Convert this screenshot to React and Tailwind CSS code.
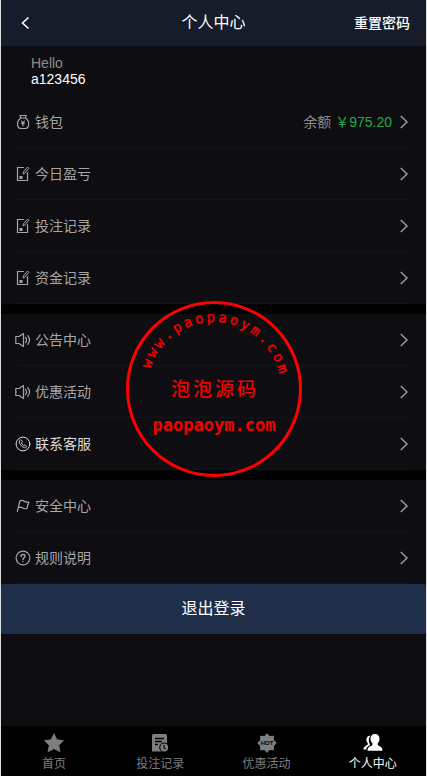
import React from 'react';

function Icon({ children }) {
  return (
    <svg viewBox="0 0 16 16" fill="none" stroke="currentColor" strokeWidth="1.200" strokeLinecap="round" strokeLinejoin="round" aria-hidden="true" className="-ml-0.5 size-4 shrink-0">
      {children}
    </svg>
  );
}

function WalletIcon() {
  return (
    <Icon>
      <path d="M5 1.500h6.200L10.300 4H5.900z M5.900 4C3.800 5.200 2.500 7.300 2.500 9.800c0 3 1.300 4.700 3.300 4.700h4.600c2 0 3.300-1.700 3.300-4.700 0-2.500-1.300-4.600-3.400-5.800" />
      <path d="M6.500 7.200L8 9l1.500-1.800M6.600 9.500h2.800M8 9v2.800" />
    </Icon>
  );
}

function NoteIcon() {
  return (
    <Icon>
      <path d="M8.500 1.500h-6v13h10V6.500" strokeLinejoin="miter" />
      <path d="M12.300 1.300L8.500 5.800 8 7.900l1.900-.8 3.700-4.500z" strokeWidth="1" />
      <path d="M4.500 10h3v3h-3z" fill="currentColor" stroke="none" />
    </Icon>
  );
}

function SpeakerIcon() {
  return (
    <Icon>
      <path d="M4 4.500H.8v7H4L8.500 14.500v-13z M4 4.500v0" />
      <path d="M10.500 5.300c1.300 1.700 1.300 3.700 0 5.400M12.700 3.700c2.300 2.700 2.300 5.900 0 8.600" />
    </Icon>
  );
}

function PhoneIcon() {
  return (
    <Icon>
      <circle cx="8" cy="8" r="6.900" strokeWidth="1" />
      <path d="M5.600 3.900L4.300 5c-.2 3.300 3 6.700 6.200 6.800l1.300-1.200-1.900-1.700-1.100.7C7.600 9 6.800 8 6.400 6.800l.9-.9z" strokeWidth=".9" />
    </Icon>
  );
}

function FlagIcon() {
  return (
    <Icon>
      <path d="M2.300 13.500L4.900 3c1.700-1.200 3.100-.7 4.200.2 1.300 1.100 2.700 1 4.700.8l-1.900 6.500c-2 .5-3.400.2-4.500-.7-1.200-.9-2.400-1-4 0" />
    </Icon>
  );
}

function HelpIcon() {
  return (
    <Icon>
      <circle cx="8" cy="8" r="6.900" />
      <path d="M6.100 6.400c0-2.600 3.900-2.500 3.900-.2 0 1.500-2 1.500-2 3.200M8 11.500v.1" strokeWidth="1.400" />
    </Icon>
  );
}

function Chevron() {
  return (
    <svg viewBox="0 0 10 14" fill="none" stroke="#9a9a9a" strokeWidth="1.500" aria-hidden="true" className="ml-2 h-3.5 w-2.5 shrink-0">
      <path d="M.8 1l6.200 6-6.200 6" />
    </svg>
  );
}

function StarIcon() {
  return (
    <svg viewBox="0 0 20 20" fill="currentColor" aria-hidden="true" className="size-5">
      <path d="M10 .8l2.900 6 6.600.8-4.800 4.600 1.300 6.600-6-3.200-6 3.200 1.300-6.600L.5 7.600l6.600-.8z" stroke="currentColor" strokeLinejoin="round" strokeWidth=".8" />
    </svg>
  );
}

function RecordIcon() {
  return (
    <svg viewBox="0 0 20 20" aria-hidden="true" className="size-5">
      <path d="M3.500 1h12A1.500 1.500 0 0 1 17 2.500V18.500H2V2.500A1.500 1.500 0 0 1 3.500 1z" fill="currentColor" />
      <path d="M5 5.500h9M5 8.500h7M5 11.500h3" stroke="#000" strokeWidth="1.300" />
      <circle cx="14.200" cy="14.500" r="5" fill="#000" />
      <circle cx="14.200" cy="14.500" r="3.900" fill="currentColor" />
      <path d="M14 12v3l1.800 1" stroke="#000" strokeWidth="1.200" fill="none" />
    </svg>
  );
}

function HotIcon() {
  return (
    <svg viewBox="0 0 20 20" aria-hidden="true" className="size-5">
      <path d="M10 .3l2.600 2.600 4.300-.1v4.100L19.700 10l-2.800 3.100v4.100l-4.300-.1L10 19.700l-2.600-2.600-4.300.1v-4.100L.3 10l2.800-3.100V2.800l4.300.1z" fill="currentColor" />
      <text x="10" y="12" textAnchor="middle" fontSize="6" fontWeight="bold" fill="#000">HOT</text>
    </svg>
  );
}

function PeopleIcon() {
  return (
    <svg viewBox="0 0 20 20" fill="currentColor" aria-hidden="true" className="size-5">
      <path d="M7.400 2.800C5 2.500 3.200 4.200 3.400 6.900c.1 1.600.8 2.600 1.500 3.300.2 1.400-.5 1.800-2 2.500C1.300 13.500.5 14.500.5 16.500h2.700c.3-2 1.400-3 3.200-3.900.6-.3.800-.7.600-1.400C5.300 8.800 5.200 5.200 7.400 2.800z" />
      <path d="M12 1C9.200 1 7.300 3.100 7.500 6c.1 1.900.9 3.300 1.900 4.300.3 1.500 0 2.100-1.400 2.700-2.600 1-3.500 2-3.500 4.700h15c0-2.700-1-3.700-3.300-4.700-1.400-.6-1.700-1.200-1.500-2.700 1-1 1.700-2.400 1.800-4.300.2-2.900-1.700-5-4.500-5z" />
    </svg>
  );
}

const groups = [
  [
    { label: '钱包', icon: WalletIcon, balance: '￥975.20' },
    { label: '今日盈亏', icon: NoteIcon },
    { label: '投注记录', icon: NoteIcon },
    { label: '资金记录', icon: NoteIcon },
  ],
  [
    { label: '公告中心', icon: SpeakerIcon },
    { label: '优惠活动', icon: SpeakerIcon },
    { label: '联系客服', icon: PhoneIcon, active: true },
  ],
  [
    { label: '安全中心', icon: FlagIcon },
    { label: '规则说明', icon: HelpIcon },
  ],
];

const tabs = [
  { label: '首页', icon: StarIcon },
  { label: '投注记录', icon: RecordIcon },
  { label: '优惠活动', icon: HotIcon },
  { label: '个人中心', icon: PeopleIcon, active: true },
];

// letters of the seal, spread over the upper arc
const sealText = 'www.paopaoym.com';
const sealAngles = sealText.split('').map((_, i) => -69 + i * 9.5);
const onArc = (deg) => {
  // step back half a glyph along the tangent so that each letter is centred
  const a = (deg * Math.PI) / 180;
  return {
    x: 88 + 67 * Math.sin(a) - 4.2 * Math.cos(a),
    y: 88 - 67 * Math.cos(a) - 4.2 * Math.sin(a),
  };
};

function Seal() {
  const points = sealAngles.map(onArc);
  return (
    <svg viewBox="0 0 176 176" fill="#f00000" className="pointer-events-none absolute top-[301px] left-1/2 size-44 -translate-x-1/2">
      <circle cx="88" cy="88" r="86.500" fill="none" stroke="#ff0000" strokeWidth="3" />
      <text
        x={points.map((p) => p.x).join(' ')}
        y={points.map((p) => p.y).join(' ')}
        rotate={sealAngles.join(' ')}
        className="font-['DejaVu_Sans_Mono',monospace] text-[14px]"
        stroke="#f00000"
        strokeWidth=".4"
      >
        {sealText}
      </text>
      <text x="45 67 89 111" y="95" className="font-['Noto_Sans_CJK_SC',sans-serif] text-[19px] font-medium">泡泡源码</text>
      <text x="88" y="130" textAnchor="middle" className="font-['DejaVu_Sans_Mono',monospace] text-[17px] font-bold">paopaoym.com</text>
    </svg>
  );
}

function Row({ item }) {
  const RowIcon = item.icon;
  return (
    <li className="border-b border-[#12161b]">
      <a href="#" className={`flex h-[51px] items-center ${item.active ? 'text-[#dddddd]' : 'text-[#a6a6a6]'}`}>
        <RowIcon />
        <span className="ml-1 flex-1">{item.label}</span>
        {item.balance && (
          <>
            <span className="mr-1 text-[#8c8c8c]">余额</span>
            <span className="text-[#22ac47]">{item.balance}</span>
          </>
        )}
        <Chevron />
      </a>
    </li>
  );
}

export default function App() {
  return (
    <div className="relative flex min-h-screen flex-col border-x border-[#dcdfe0] bg-[#0e0d12] font-['Liberation_Sans','Noto_Sans_CJK_SC',sans-serif] text-[14px] leading-4 text-white">
      <header className="grid h-[46px] grid-cols-3 items-center bg-[#161c29] px-4">
        <button type="button" aria-label="返回" className="flex h-full w-6 items-center pl-1">
          <svg viewBox="0 0 10 14" fill="none" stroke="currentColor" strokeWidth="1.600" className="h-3.5 w-2.5">
            <path d="M7.500 1.500L1.500 7l6 5.500" />
          </svg>
        </button>
        <h1 className="text-center text-[16px] leading-5">个人中心</h1>
        <a href="#" className="text-right font-medium">重置密码</a>
      </header>

      <div className="h-[50px] pt-[9px] pl-[30px]">
        <p className="text-[#8c8c8c]">Hello</p>
        <p>a123456</p>
      </div>

      <main className="flex flex-col">
        <div className="flex flex-col gap-2.5 bg-black">
          {groups.map((items) => (
            <ul key={items[0].label} className="bg-[#0e0d12] px-4">
              {items.map((item) => (
                <Row key={item.label} item={item} />
              ))}
            </ul>
          ))}
        </div>
        <button type="button" className="h-[50px] rounded-xs bg-[#1f2e49] text-[16px]">退出登录</button>
      </main>

      <nav className="mt-auto grid h-[50px] grid-cols-4 bg-black text-[12px]">
        {tabs.map((tab) => {
          const TabIcon = tab.icon;
          return (
            <a key={tab.label} href="#" className={`flex flex-col items-center pt-[7px] ${tab.active ? 'text-white' : 'text-[#7d7e80]'}`}>
              <TabIcon />
              <span className="mt-[3px]">{tab.label}</span>
            </a>
          );
        })}
      </nav>

      <Seal />
    </div>
  );
}
